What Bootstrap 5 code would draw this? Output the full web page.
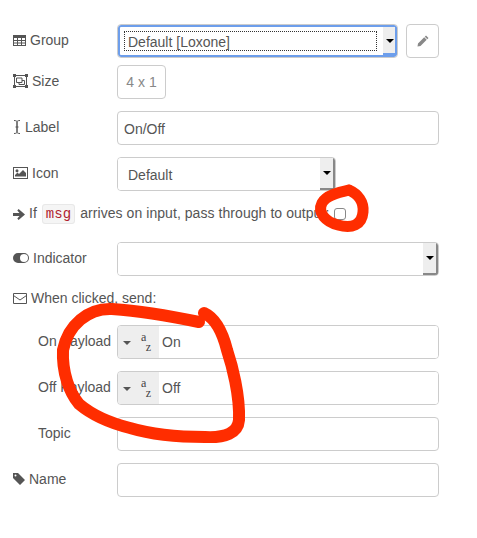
<!DOCTYPE html>
<html lang="en">

<head>
    <meta charset="UTF-8">
    <meta name="viewport" content="width=device-width, initial-scale=1.0">
    <title>Switch node</title>
    <link href="https://cdn.jsdelivr.net/npm/bootstrap@5.3.0/dist/css/bootstrap.min.css" rel="stylesheet">
    <style>
        body { font-family: "Liberation Sans", Arial, sans-serif; font-size: 14px; color: #555; background: #fff; }
        .page { position: relative; width: 477px; height: 538px; overflow: hidden; padding: 24px 38px 0 13px; }
        .frow { display: flex; align-items: center; height: 34px; margin-bottom: 12px; }
        .frow.tight { margin-bottom: 7px; height: 34px; }
        .frow.flush { margin-bottom: 0; }
        .flabel { width: 104px; flex: none; display: flex; align-items: center; gap: 4px; margin: 0 0 2px; }
        .flabel.indent { padding-left: 25px; }
        .ico { flex: none; fill: #555; }
        .ntext { flex: 1; min-width: 0; height: 34px; border: 1px solid #ccc; border-radius: 4px; padding: 1px 6px 0; font-size: 14px; color: #555; outline: none; }
        .sbox { height: 34px; border: 1px solid #ccc; border-radius: 4px; display: flex; overflow: hidden; flex: 1; min-width: 0; }
        .sbox.narrow { flex: none; width: 219px; }
        .sbox select { flex: 1; min-width: 0; appearance: none; border: 0; outline: 0; background: #fff; padding: 2px 0 0 10px; font-size: 14px; color: #555; font-family: inherit; }
        .sarrow { width: 15px; flex: none; background: #eee; display: flex; align-items: center; justify-content: center; border-right: 2px solid #888; border-bottom: 2px solid #888; }
        .sarrow i { width: 0; height: 0; border-left: 4px solid transparent; border-right: 4px solid transparent; border-top: 4px solid #000; }
        .sbox.focused { box-shadow: inset 0 0 0 2px #6d9eeb; padding: 6px 0 6px 6px; }
        .sbox.focused select { border: 1px dotted #333; padding: 0 0 0 3px; }
        .sbox.focused .sarrow { border: 0; width: 14px; margin: -4px 0 -4px 6px; box-shadow: inset -2px -2px 0 #6d9eeb; }
        .sq-btn { width: 33px; height: 34px; margin-left: 8px; flex: none; border: 1px solid #ccc; border-radius: 4px; background: #fff; display: flex; align-items: center; justify-content: center; padding: 0; }
        .size-btn { width: 49px; height: 34px; border: 1px solid #ccc; border-radius: 4px; background: #fff; color: #888; font-size: 14px; padding: 0; }
        .check-row { height: 51px; display: flex; align-items: center; gap: 4px; padding-bottom: 5px; }
        .check-row .cbox { width: 12px; height: 12px; border: 1px solid #888; border-radius: 3px; margin: 0 0 0 1px; appearance: none; background: #fff; flex: none; }
        .mcode { font-family: "Liberation Mono", monospace; font-size: 14px; color: #b01c2e; background: #f5f5f5; border: 1px solid #e8e8e8; border-radius: 3px; padding: 1px 3px; margin: 0 1px; }
        .ifline { letter-spacing: .06px; white-space: nowrap; }
        .sect { height: 49px; display: flex; align-items: center; gap: 4px; padding-bottom: 4px; }
        .tbox { height: 34px; border: 1px solid #ccc; border-radius: 4px; flex: 1; display: flex; overflow: hidden; min-width: 0; }
        .tbtn { width: 41px; flex: none; background: #eee; display: flex; align-items: center; gap: 10px; padding-left: 5px; }
        .tbtn i { width: 0; height: 0; border-left: 4px solid transparent; border-right: 4px solid transparent; border-top: 4px solid #555; margin-top: 2px; }
        .az { font-family: "Liberation Serif", serif; font-size: 12px; line-height: 10px; color: #444; display: flex; flex-direction: column; width: 10px; }
        .az span:last-child { align-self: flex-end; }
        .tbox input { flex: 1; min-width: 0; border: 0; outline: 0; padding: 1px 0 0 3px; font-size: 14px; color: #555; }
        .scribble { position: absolute; left: 0; top: 0; pointer-events: none; }
    </style>
</head>

<body>
    <div class="page">
        <div class="frow tight">
            <label class="flabel">
                <svg class="ico" width="13" height="11" viewBox="0 0 13 11"><path d="M0 0h13v11H0zM1 3v2h3V3zm4 0v2h3V3zm4 0v2h3V3zM1 6v1.500h3V6zm4 0v1.500h3V6zm4 0v1.500h3V6zM1 8.500V10h3V8.500zm4 0V10h3V8.500zm4 0V10h3V8.500z" fill-rule="evenodd"/></svg>
                Group
            </label>
            <div class="sbox focused">
                <select><option>Default [Loxone]</option></select>
                <span class="sarrow"><i></i></span>
            </div>
            <button type="button" class="sq-btn">
                <svg width="12" height="12" viewBox="0 0 12 12"><path fill="#888" d="M9 0.500l2.500 2.500-1.200 1.200-2.500-2.500zM7.200 2.300l2.500 2.500L3.500 11 0.500 11.500 1 8.500z"/></svg>
            </button>
        </div>
        <div class="frow">
            <label class="flabel">
                <svg class="ico" width="15" height="14" viewBox="0 0 15 14"><path fill="none" stroke="#555" d="M1.500 1.500h12v11h-12z"/><path fill="none" stroke="#555" d="M3.500 4h5.500v4.500H3.500zM6 8.500v2h5.500V6.500H9"/><path d="M0 0h3v3H0zM12 0h3v3h-3zM0 11h3v3H0zM12 11h3v3h-3z"/></svg>
                Size
            </label>
            <button type="button" class="size-btn">4 x 1</button>
        </div>
        <div class="frow">
            <label class="flabel">
                <svg class="ico" width="8" height="14" viewBox="0 0 8 14"><path fill="none" stroke="#555" d="M1 .500c2 0 3 .500 3 1.500v10c0 1-1 1.500-3 1.500M7 .500c-2 0-3 .500-3 1.500v10c0 1 1 1.500 3 1.500M2.500 7h3"/></svg>
                Label
            </label>
            <input class="ntext" type="text" value="On/Off">
        </div>
        <div class="frow flush">
            <label class="flabel">
                <svg class="ico" width="15" height="12" viewBox="0 0 15 12"><path fill-rule="evenodd" d="M0 0h15v12H0zM1 1v10h13V1zM2 9.500V8l2.500-2.500L6 7l4-4 3 3v3.500zM4 2.200a1.500 1.500 0 1 1 0 3 1.500 1.500 0 0 1 0-3z"/></svg>
                Icon
            </label>
            <div class="sbox narrow">
                <select><option>Default</option></select>
                <span class="sarrow"><i></i></span>
            </div>
        </div>
        <div class="check-row">
            <svg class="ico" width="12" height="11" viewBox="0 0 12 11"><path d="M0 4h6.500L4.300 1.500 5.600 0 12 5.500 5.600 11 4.300 9.500 6.500 7H0z"/></svg>
            <span class="ifline">If <code class="mcode">msg</code> arrives on input, pass through to output:</span>
            <input class="cbox" type="checkbox">
        </div>
        <div class="frow flush">
            <label class="flabel">
                <svg class="ico" width="16" height="10" viewBox="0 0 16 10"><path fill-rule="evenodd" d="M5 0h6a5 5 0 0 1 0 10H5A5 5 0 0 1 5 0zM11 1a4 4 0 1 0 0 8 4 4 0 0 0 0-8z"/></svg>
                Indicator
            </label>
            <div class="sbox">
                <select><option></option></select>
                <span class="sarrow"><i></i></span>
            </div>
        </div>
        <div class="sect">
            <svg class="ico" width="14" height="11" viewBox="0 0 14 11"><path fill="none" stroke="#555" d="M.500.500h13v10H.500zM.500 2.500L7 7l6.500-4.500"/></svg>
            When clicked, send:
        </div>
        <div class="frow">
            <label class="flabel indent">On Payload</label>
            <div class="tbox">
                <div class="tbtn"><i></i><div class="az"><span>a</span><span>z</span></div></div>
                <input type="text" value="On">
            </div>
        </div>
        <div class="frow">
            <label class="flabel indent">Off Payload</label>
            <div class="tbox">
                <div class="tbtn"><i></i><div class="az"><span>a</span><span>z</span></div></div>
                <input type="text" value="Off">
            </div>
        </div>
        <div class="frow">
            <label class="flabel indent">Topic</label>
            <input class="ntext" type="text">
        </div>
        <div class="frow">
            <label class="flabel">
                <svg class="ico" width="12" height="12" viewBox="0 0 12 12"><path fill-rule="evenodd" d="M0 0h5l7 7-5 5-7-7zM2.500 1.500a1 1 0 1 0 0 2 1 1 0 0 0 0-2z"/></svg>
                Name
            </label>
            <input class="ntext" type="text">
        </div>

        <!-- red pen marks drawn over the form -->
        <svg class="scribble" width="477" height="538" fill="none" stroke="#ff2d00" stroke-linecap="round" stroke-linejoin="round">
            <path stroke-width="12" d="M199 322C170 316 140 311 112 309C88 308 68 325 63 350C62 372 69 392 79 404C92 415 110 423 130 428C150 434 180 437 205 437C225 438 238 433 239 420C240 395 232 365 227 350C222 330 215 318 204 313"/>
            <path stroke-width="11" d="M349 190C340 192 326 195 322 203C317 213 326 222 338 225C352 229 362 225 363 212C364 202 358 194 349 190"/>
        </svg>
    </div>

    <script src="https://cdn.jsdelivr.net/npm/bootstrap@5.3.0/dist/js/bootstrap.bundle.min.js"></script>
</body>

</html>
